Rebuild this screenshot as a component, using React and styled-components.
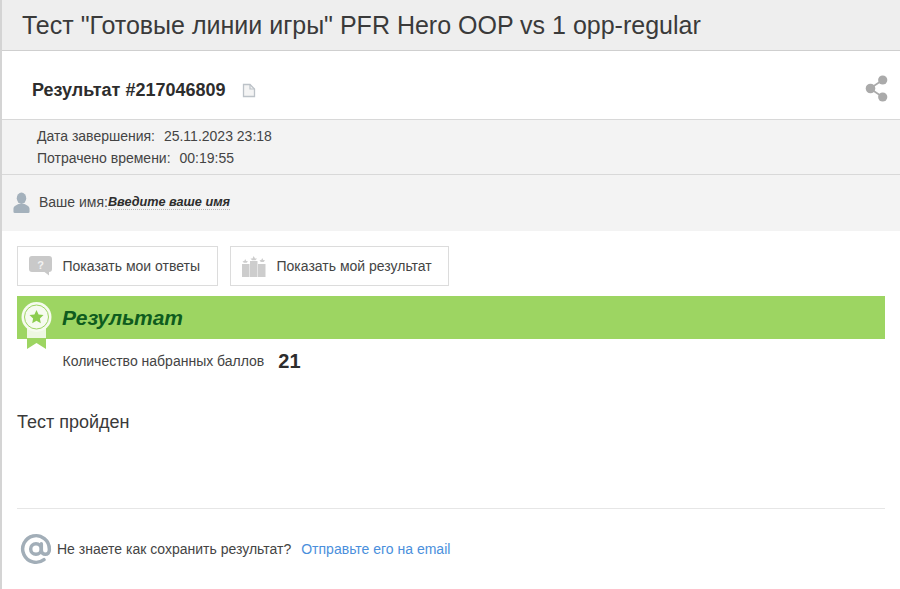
import React from "react";
import styled, { createGlobalStyle } from "styled-components";
import { AtSign } from "lucide-react";

const Global = createGlobalStyle`
  html, body { margin: 0; padding: 0; background: #fff; }
  body { font-family: "Liberation Sans", Arial, sans-serif; color: #333; }
`;

const Page = styled.div`
  width: 900px;
  height: 589px;
  box-sizing: border-box;
  border-left: 2px solid #d4d4d4;
  overflow: hidden;
`;

const Header = styled.header`
  height: 51px;
  box-sizing: border-box;
  padding-left: 20px;
  display: flex;
  align-items: center;
  background: #eeeeee;
  border-bottom: 1px solid #cfcfcf;
`;

const Title = styled.h1`
  margin: 0;
  font-size: 25px;
  font-weight: 400;
  color: #3a3a3a;
`;

const ResultRow = styled.div`
  box-sizing: border-box;
  height: 68px;
  padding: 10px 11px 0 30px;
  display: flex;
  align-items: center;
`;

const ResultId = styled.div`
  font-size: 18px;
  font-weight: 700;
  color: #2d2d2d;
`;

const CopyButton = styled.span`
  display: flex;
  margin-left: 16px;
`;

const ShareButton = styled.span`
  display: flex;
  margin: 0 0 4px auto;
`;

const Meta = styled.div`
  box-sizing: border-box;
  height: 56px;
  padding: 5px 0 0 35px;
  background: #f3f3f3;
  border-top: 1px solid #d8d8d8;
  border-bottom: 1px solid #d8d8d8;
  font-size: 14px;
  line-height: 22px;
  color: #444;
`;

const MetaValue = styled.span`
  margin-left: 5px;
`;

const NameRow = styled.div`
  height: 54px;
  padding: 0 0 2px 11px;
  display: flex;
  align-items: center;
  background: #f3f3f3;
  font-size: 14px;
  color: #444;
`;

const NameLabel = styled.span`
  margin-left: 9px;
`;

const NameInput = styled.span`
  font-size: 12.7px;
  font-weight: 700;
  font-style: italic;
  color: #2d2d2d;
  border-bottom: 1px dotted #b5b5b5;
`;

const Content = styled.main`
  padding: 15px 15px 0 15px;
`;

const Buttons = styled.div`
  display: flex;
  gap: 12px;
`;

const ActionButton = styled.button`
  box-sizing: border-box;
  width: ${(p) => p.$width}px;
  height: 40px;
  padding: 0 0 0 11px;
  display: flex;
  align-items: center;
  gap: 10.5px;
  background: #fff;
  border: 1px solid #dcdcdc;
  font-family: inherit;
  font-size: 14px;
  color: #444;
`;

const Banner = styled.div`
  position: relative;
  height: 43px;
  margin-top: 10px;
  padding-left: 45px;
  display: flex;
  align-items: center;
  background: #9dd562;
  font-size: 21px;
  font-weight: 700;
  font-style: italic;
  color: #0e5c1e;
`;

const Medal = styled.svg`
  position: absolute;
  left: 3px;
  top: 5px;
`;

const Score = styled.div`
  height: 44px;
  padding-left: 45.5px;
  display: flex;
  align-items: center;
  gap: 14px;
  font-size: 14px;
  color: #444;
`;

const ScoreValue = styled.span`
  font-size: 20px;
  font-weight: 700;
  color: #2d2d2d;
`;

const Verdict = styled.p`
  margin: 28px 0 0;
  font-size: 18px;
  line-height: 22px;
  color: #3a3a3a;
`;

const Footer = styled.footer`
  margin-top: 75px;
  padding: 24px 0 0 4px;
  display: flex;
  align-items: center;
  border-top: 1px solid #e6e6e6;
  font-size: 14px;
  color: #444;
`;

const MailLink = styled.a`
  margin-left: 10px;
  color: #4a8fdc;
`;

const MailMark = styled(AtSign)`
  width: 32px;
  height: 32px;
  margin: 0 5px 0 -1px;
  color: #a2aeb8;
`;

const CopyIcon = () => (
  <svg width="14" height="15" viewBox="0 0 14 15">
    <path d="M1.5 1.5H8L12.5 6V13.5H1.5Z" fill="#f4f4f4" stroke="#bcc2c8" strokeWidth="1.3" />
    <path d="M8 1.5V6H12.5" fill="none" stroke="#bcc2c8" strokeWidth="1.2" />
  </svg>
);

const ShareIcon = () => (
  <svg width="24" height="28" viewBox="0 0 24 28">
    <path d="M5 14.5L17.7 6M5 14.5L17.7 23" stroke="#aaa" strokeWidth="1.6" />
    <circle cx="5.5" cy="14.5" r="4.8" fill="#aaa" />
    <circle cx="17.7" cy="6" r="4.6" fill="#aaa" />
    <circle cx="17.7" cy="23" r="4.6" fill="#aaa" />
  </svg>
);

const UserIcon = () => (
  <svg width="17" height="21" viewBox="0 0 18 22">
    <ellipse cx="9" cy="6.5" rx="5" ry="6" fill="#a4b1bc" />
    <path d="M0.5 21V17.5C0.5 14.5 4 13.5 6 12.5H12C14 13.5 17.5 14.5 17.5 17.5V21Q17.5 22 16 22H2Q0.5 22 0.5 21Z" fill="#a4b1bc" />
  </svg>
);

const QuestionIcon = () => (
  <svg width="23" height="20" viewBox="0 0 23 20">
    <path d="M3 0H20Q23 0 23 3V13Q23 16 20 16V19.5L15.5 16H3Q0 16 0 13V3Q0 0 3 0Z" fill="#c9c9c9" />
    <text x="11.5" y="12.5" fontSize="11" fontWeight="700" fill="#f2f2f2" textAnchor="middle" fontFamily="Liberation Sans">?</text>
  </svg>
);

const PodiumIcon = () => (
  <svg width="24" height="21" viewBox="0 0 24 21">
    <g fill="#cdcdcd">
      <rect x="0" y="8" width="7.5" height="13" />
      <rect x="8" y="5" width="7.5" height="16" />
      <rect x="16" y="8" width="7.5" height="13" />
      <path d="M11.7 0L13 2.6H15L13.5 4.2H10L8.5 2.6H10.5Z" />
      <path d="M3.2 3L4.2 5L6 5.2L4.7 6.8H1.8L0.5 5.2L2.3 5Z" />
      <path d="M20.2 2L21.2 4L23 4.2L21.7 6H18.8L17.5 4.2L19.3 4Z" />
    </g>
  </svg>
);

const MedalIcon = () => (
  <Medal width="33" height="48" viewBox="0 0 33 48">
    <path d="M7 26H26V48L16.5 42L7 48Z" fill="#9dd562" />
    <path d="M7 26H26V37H7Z" fill="#eef8e2" />
    <circle cx="16.5" cy="16" r="15" fill="#f6fbef" />
    <circle cx="16.5" cy="16" r="12" fill="none" stroke="#9dd562" strokeWidth="1" />
    <path d="M16.5 9L18.6 13.5L23.5 14.1L19.9 17.4L20.8 22.2L16.5 19.8L12.2 22.2L13.1 17.4L9.5 14.1L14.4 13.5Z" fill="#8ccc4e" />
  </Medal>
);

export default function App() {
  return (
    <>
      <Global />
      <Page>
        <Header>
          <Title>Тест "Готовые линии игры" PFR Hero OOP vs 1 opp-regular</Title>
        </Header>
        <ResultRow>
          <ResultId>Результат #217046809</ResultId>
          <CopyButton><CopyIcon /></CopyButton>
          <ShareButton><ShareIcon /></ShareButton>
        </ResultRow>
        <Meta>
          <div>Дата завершения: <MetaValue>25.11.2023 23:18</MetaValue></div>
          <div>Потрачено времени: <MetaValue>00:19:55</MetaValue></div>
        </Meta>
        <NameRow>
          <UserIcon />
          <NameLabel>Ваше имя:</NameLabel>
          <NameInput>Введите ваше имя</NameInput>
        </NameRow>
        <Content>
          <Buttons>
            <ActionButton $width={201}><QuestionIcon />Показать мои ответы</ActionButton>
            <ActionButton $width={219}><PodiumIcon />Показать мой результат</ActionButton>
          </Buttons>
          <Banner><MedalIcon />Результат</Banner>
          <Score>Количество набранных баллов <ScoreValue>21</ScoreValue></Score>
          <Verdict>Тест пройден</Verdict>
          <Footer>
            <MailMark strokeWidth={2.6} />
            Не знаете как сохранить результат?
            <MailLink>Отправьте его на email</MailLink>
          </Footer>
        </Content>
      </Page>
    </>
  );
}
